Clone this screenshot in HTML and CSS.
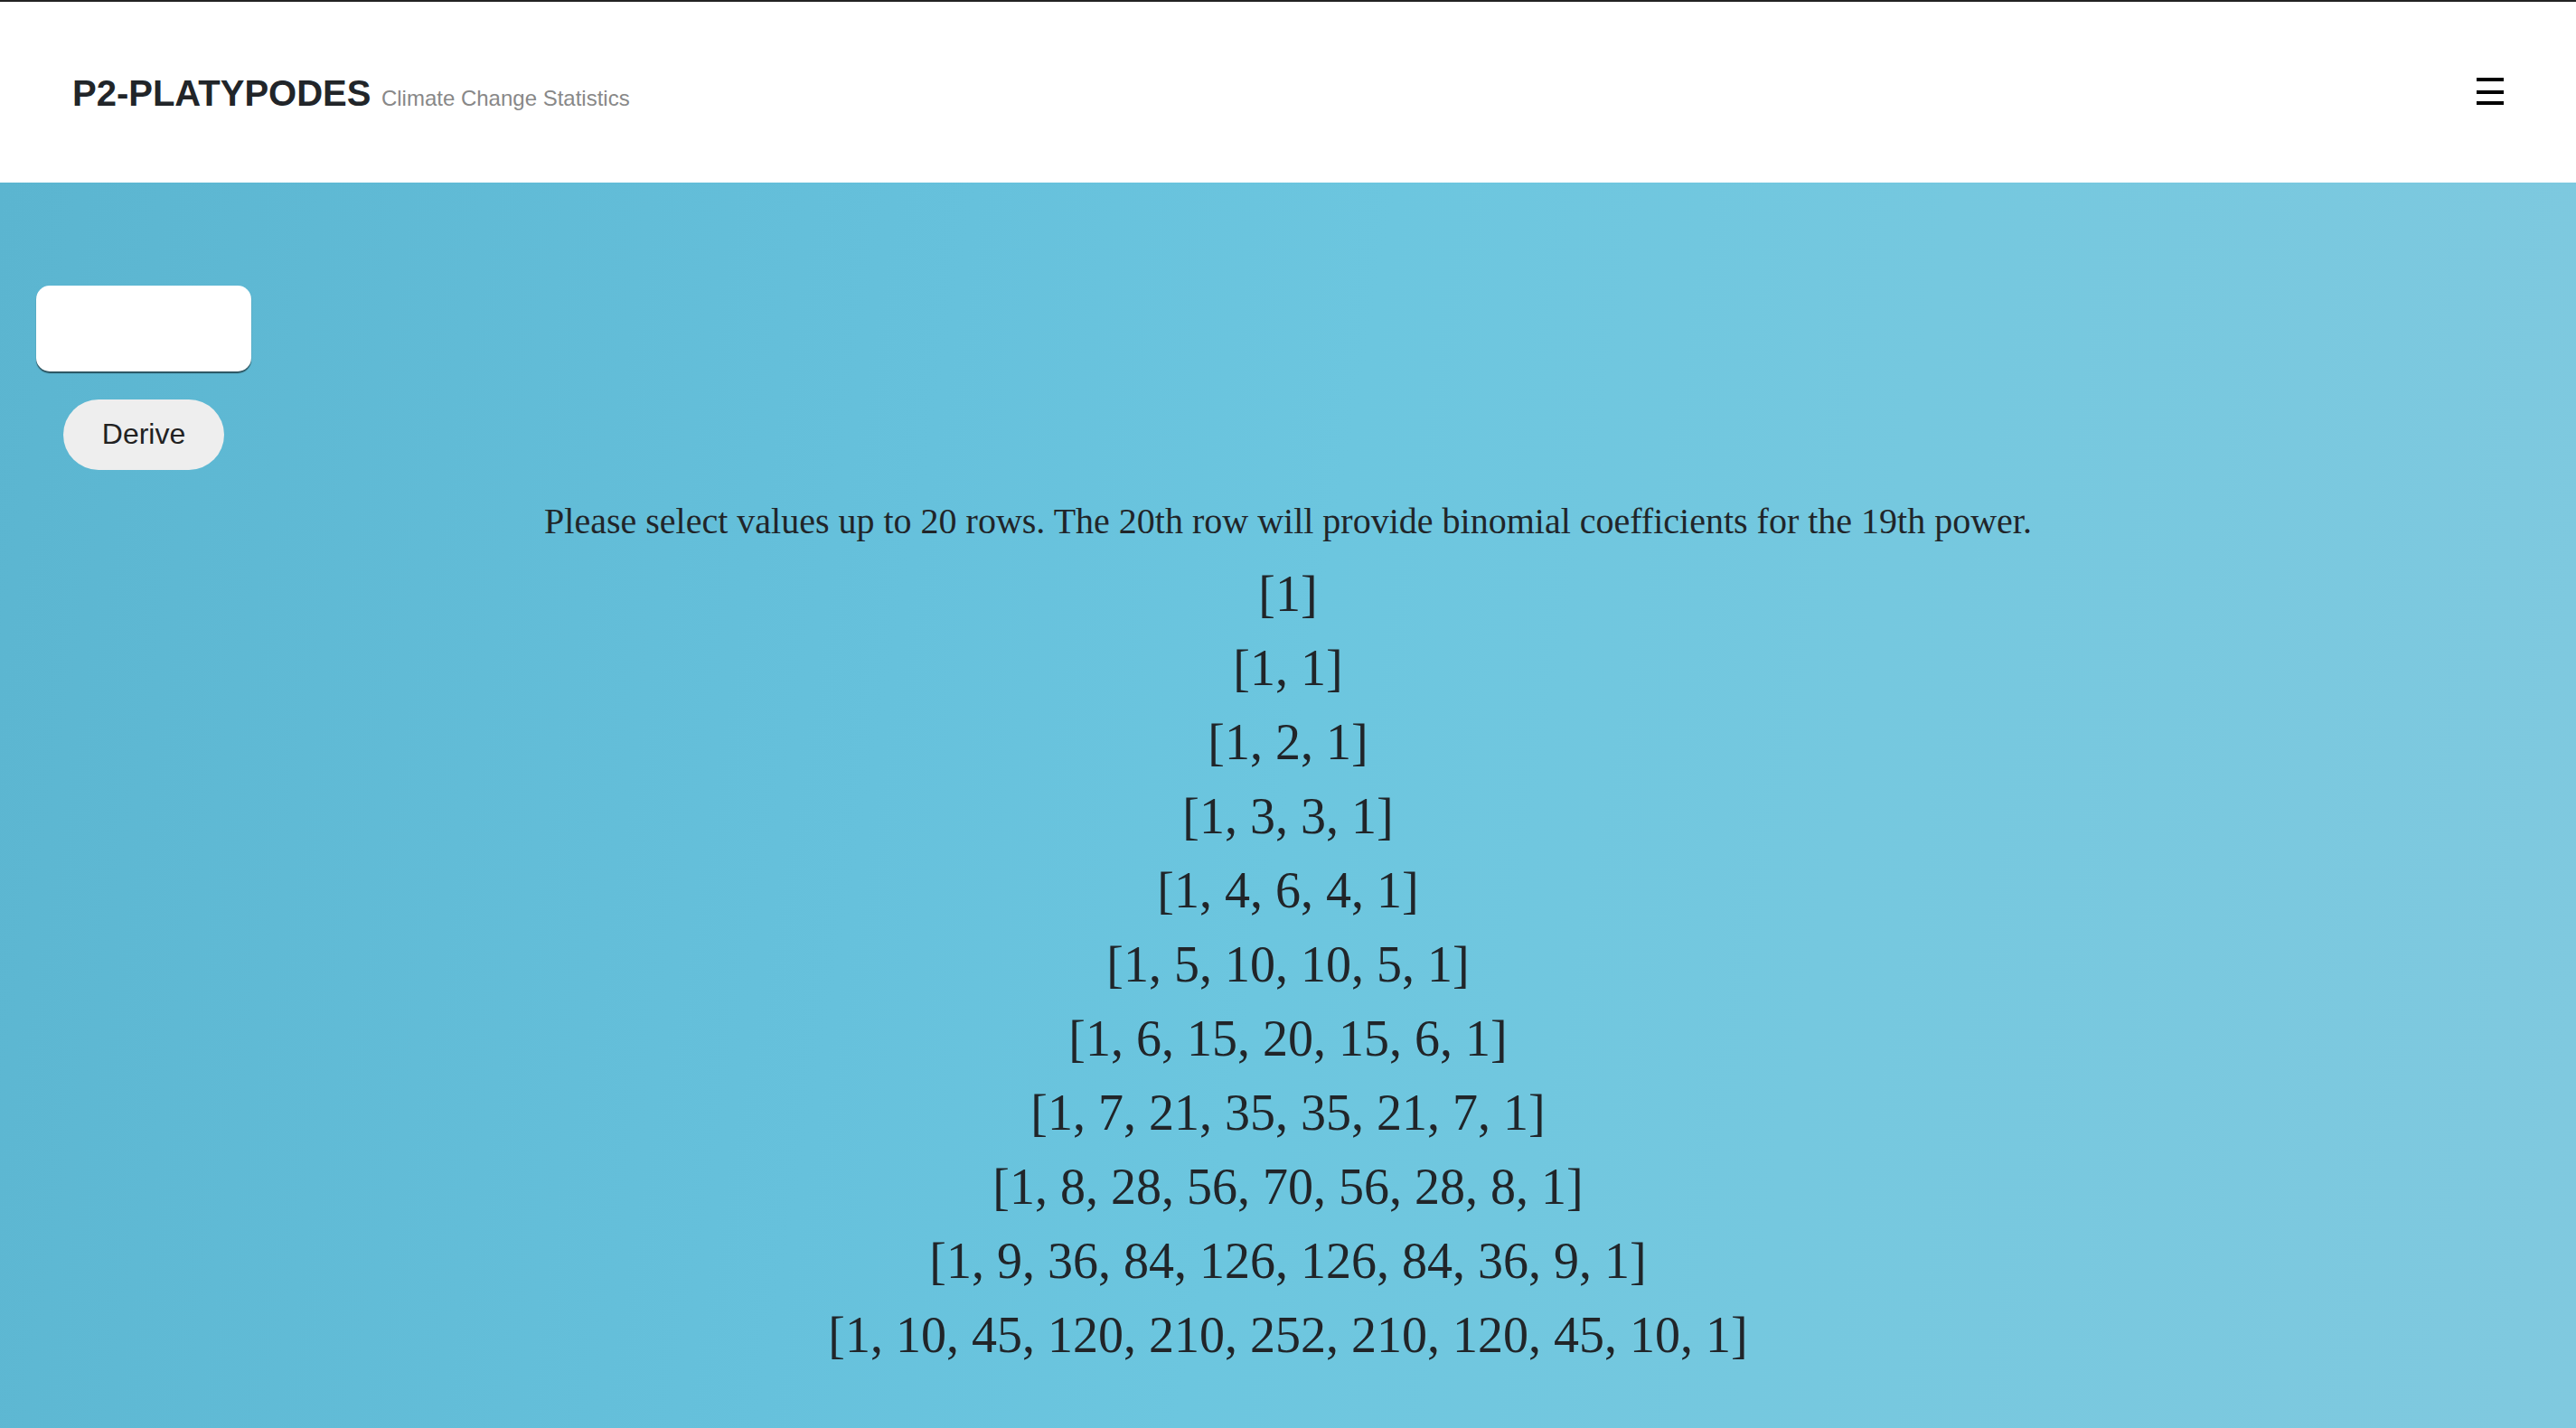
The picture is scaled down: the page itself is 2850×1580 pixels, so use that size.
FILE: index.html
```html
<!DOCTYPE html>
<html lang="en">
<head>
<meta charset="utf-8">
<title>P2-PLATYPODES</title>
<link rel="stylesheet" href="styles.css">
</head>
<body>
<header class="navbar">
  <div class="brand">
    <span class="brand-title">P2-PLATYPODES</span>
    <span class="brand-sub">Climate Change Statistics</span>
  </div>
  <svg class="menu-icon" width="30" height="30" viewBox="0 0 30 30" aria-hidden="true">
    <rect x="0" y="0" width="30" height="4" fill="#000"/>
    <rect x="0" y="14" width="30" height="4" fill="#000"/>
    <rect x="0" y="26" width="30" height="4" fill="#000"/>
  </svg>
</header>
<main class="content">
  <form class="derive-form">
    <input class="rows-input" type="text" aria-label="rows">
    <button class="derive-btn" type="button">Derive</button>
  </form>
  <p class="note">Please select values up to 20 rows. The 20th row will provide binomial coefficients for the 19th power.</p>
  <div class="triangle">
    <div class="row">[1]</div>
    <div class="row">[1, 1]</div>
    <div class="row">[1, 2, 1]</div>
    <div class="row">[1, 3, 3, 1]</div>
    <div class="row">[1, 4, 6, 4, 1]</div>
    <div class="row">[1, 5, 10, 10, 5, 1]</div>
    <div class="row">[1, 6, 15, 20, 15, 6, 1]</div>
    <div class="row">[1, 7, 21, 35, 35, 21, 7, 1]</div>
    <div class="row">[1, 8, 28, 56, 70, 56, 28, 8, 1]</div>
    <div class="row">[1, 9, 36, 84, 126, 126, 84, 36, 9, 1]</div>
    <div class="row">[1, 10, 45, 120, 210, 252, 210, 120, 45, 10, 1]</div>
  </div>
</main>
</body>
</html>
```

FILE: styles.css
```css
html, body {
  margin: 0;
  padding: 0;
}

body {
  height: 1580px;
  display: flex;
  flex-direction: column;
  border-top: 2px solid #222;
  box-sizing: border-box;
  font-family: "Liberation Sans", Arial, sans-serif;
  color: #212529;
  overflow: hidden;
}

.navbar {
  height: 200px;
  box-sizing: border-box;
  padding: 10px 80px 0 80px;
  background: #fff;
  display: flex;
  align-items: center;
  justify-content: space-between;
  flex-shrink: 0;
}

.brand {
  line-height: 60px;
  white-space: nowrap;
}

.brand-title {
  font-size: 40px;
  font-weight: 700;
  color: #212529;
}

.brand-sub {
  font-size: 24px;
  color: #888;
  margin-left: 7px;
}

.menu-icon {
  display: block;
  margin-top: -12px;
}

.content {
  flex: 1;
  background: linear-gradient(100deg, #5bb5d0 0%, #66c1dc 35%, #6cc6df 50%, #75c8df 70%, #80c9df 100%);
  padding: 114px 0 0 0;
}

.derive-form {
  width: 238px;
  margin-left: 40px;
  display: flex;
  flex-direction: column;
  align-items: center;
  gap: 31px;
}

.rows-input {
  width: 238px;
  height: 95px;
  box-sizing: border-box;
  border: none;
  border-radius: 15px;
  background: #fff;
  box-shadow: 0 2px 1px rgba(0, 0, 0, 0.55);
  outline: none;
  padding: 0 16px;
  font-size: 32px;
}

.derive-btn {
  width: 178px;
  height: 78px;
  border: none;
  border-radius: 39px;
  background: #eeeeee;
  color: #222;
  font-family: "Liberation Sans", Arial, sans-serif;
  font-size: 32px;
  padding: 0 0 2px 0;
}

.note {
  margin: 34px 0 16px 0;
  text-align: center;
  font-family: "Liberation Serif", "Times New Roman", serif;
  font-size: 40px;
  line-height: 46px;
  color: #212529;
}

.triangle {
  text-align: center;
  font-family: "Liberation Serif", "Times New Roman", serif;
  font-size: 56px;
  line-height: 82px;
  color: #212529;
}
```
